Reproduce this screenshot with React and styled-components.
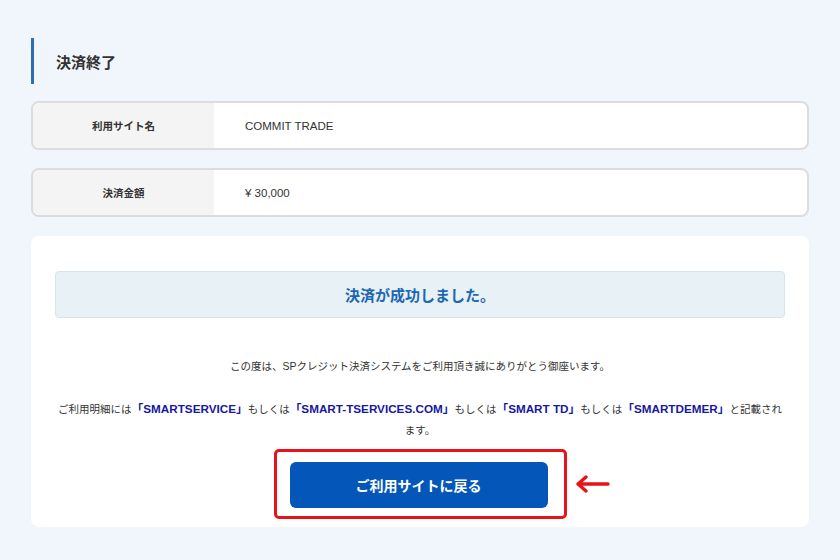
import React from 'react';
import styled, { createGlobalStyle } from 'styled-components';

const GlobalStyle = createGlobalStyle`
  body {
    margin: 0;
    background: #f1f6fd;
    font-family: "Liberation Sans", "Noto Sans CJK JP", sans-serif;
    color: #333;
  }
`

const Page = styled.div`
  padding: 38px 31px 33px 31px;
`

const Heading = styled.h1`
  display: flex;
  align-items: center;
  height: 46px;
  margin: 0;
  padding-left: 22px;
  border-left: 3px solid #2e6fb4;
  font-size: 15px;
  font-weight: 700;
  color: #333;
`

const InfoList = styled.div`
  display: flex;
  flex-direction: column;
  gap: 18px;
  margin-top: 17px;
`

const InfoRow = styled.div`
  display: grid;
  grid-template-columns: 181px 1fr;
  height: 49px;
  box-sizing: border-box;
  border: 2px solid #dcdcdc;
  border-radius: 8px;
  overflow: hidden;
  background: #fff;
`

const Label = styled.div`
  display: flex;
  align-items: center;
  justify-content: center;
  background: #f4f4f4;
  font-size: 10.5px;
  font-weight: 700;
  color: #333;
`

const Value = styled.div`
  display: flex;
  align-items: center;
  padding-left: 31px;
  font-size: 11.5px;
  color: #333;
`

const Card = styled.section`
  margin-top: 19px;
  padding: 35px 24px 8px;
  background: #fff;
  border-radius: 8px;
`

const SuccessBox = styled.div`
  display: flex;
  align-items: center;
  justify-content: center;
  height: 47px;
  box-sizing: border-box;
  border: 1px solid #d6e5ec;
  border-radius: 4px;
  background: #e8f1f5;
  font-size: 15px;
  font-weight: 700;
  color: #1c68b0;
`

const Message = styled.p`
  margin: ${p => p.$gap}px 0 0;
  font-size: 10.5px;
  line-height: 21px;
  text-align: center;
  color: #333;
`

const Brand = styled.strong`
  color: #1717a2;
  font-weight: 700;
  font-size: 11.7px;
`

const ButtonRow = styled.div`
  display: flex;
  justify-content: center;
  margin-top: 8px;
`

const Highlight = styled.div`
  position: relative;
  padding: 10px 16px 8px 13px;
  border: 3px solid #e8121a;
  border-radius: 5px;
`

const BackButton = styled.button`
  display: block;
  width: 258px;
  height: 46px;
  border: none;
  border-radius: 6px;
  background: #0457b9;
  color: #fff;
  font-family: inherit;
  font-size: 14px;
  font-weight: 700;
  cursor: pointer;
`

const Arrow = styled.svg`
  position: absolute;
  left: calc(100% + 10px);
  top: 50%;
  transform: translateY(-50%);
`

const brands = ['SMARTSERVICE', 'SMART-TSERVICES.COM', 'SMART TD', 'SMARTDEMER'];

const App = () => {
  return (
    <>
      <GlobalStyle />
      <Page>
        <Heading>決済終了</Heading>
        <InfoList>
          <InfoRow>
            <Label>利用サイト名</Label>
            <Value>COMMIT TRADE</Value>
          </InfoRow>
          <InfoRow>
            <Label>決済金額</Label>
            <Value>¥ 30,000</Value>
          </InfoRow>
        </InfoList>
        <Card>
          <SuccessBox>決済が成功しました。</SuccessBox>
          <Message $gap={38}>
            この度は、SPクレジット決済システムをご利用頂き誠にありがとう御座います。
          </Message>
          <Message $gap={21}>
            ご利用明細には
            {brands.map((b, i) => (
              <React.Fragment key={b}>
                {i > 0 && 'もしくは'}
                <Brand>「{b}」</Brand>
              </React.Fragment>
            ))}
            と記載されます。
          </Message>
          <ButtonRow>
            <Highlight>
              <BackButton>ご利用サイトに戻る</BackButton>
              <Arrow width="36" height="18" viewBox="0 0 36 18">
                <path d="M34 9 H5 M12 2 L4 9 L12 16" fill="none" stroke="#e8121a" strokeWidth="3.4" strokeLinecap="round" strokeLinejoin="round" />
              </Arrow>
            </Highlight>
          </ButtonRow>
        </Card>
      </Page>
    </>
  )
}

export default App;
